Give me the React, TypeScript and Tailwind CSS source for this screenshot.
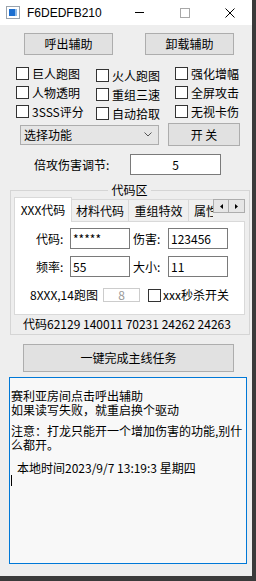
import React from "react";

const Check = ({ label, className = "" }: { label: string; className?: string }) => (
  <div className={`flex h-[19px] items-center gap-[3px] ${className}`}>
    <span className="block h-[13px] w-[13px] shrink-0 border border-[#333333] bg-white" />
    <span className="whitespace-nowrap">{label}</span>
  </div>
);

const Btn = ({ children, className = "" }: { children: React.ReactNode; className?: string }) => (
  <div
    className={`flex items-center justify-center border border-[#adadad] bg-[#e1e1e1] whitespace-pre ${className}`}
  >
    {children}
  </div>
);

const Field = ({ value }: { value: string }) => (
  <div className="flex h-[21px] w-[60px] items-center border border-[#7a7a7a] bg-white px-[2px]">{value}</div>
);

export default function App() {
  return (
    <div className="h-[581px] w-[256px] overflow-hidden bg-[#3a3a3a] font-['Noto_Sans_CJK_SC','Liberation_Sans',sans-serif] text-[12px] leading-[14px] text-black">
      <div className="flex h-[576px] w-[252px] flex-col bg-[#eeeeee]">
        {/* title bar */}
        <div className="flex h-[25px] shrink-0 items-center bg-white">
          <svg className="ml-[6px]" width="14" height="13" viewBox="0 0 14 13">
            <rect x="0.5" y="0.5" width="13" height="12" fill="#ffffff" stroke="#9aa3ad" />
            <rect x="3" y="3" width="6" height="7" fill="#1c6fd1" />
            <rect x="9" y="3" width="2" height="7" fill="#8fbbe8" />
          </svg>
          <span className="ml-[7px] font-['Liberation_Sans',sans-serif] text-[12px]">F6DEDFB210</span>
          <div className="ml-auto flex h-full items-center">
            <div className="flex w-[45px] justify-center">
              <span className="block h-px w-[9px] bg-black" />
            </div>
            <div className="flex w-[45px] justify-center">
              <span className="block h-[10px] w-[10px] border border-[#a8a8a8]" />
            </div>
            <div className="flex w-[45px] justify-center">
              <svg width="10" height="10" viewBox="0 0 10 10">
                <path d="M0.5 0.5 L9.5 9.5 M9.5 0.5 L0.5 9.5" stroke="#000" strokeWidth="1" />
              </svg>
            </div>
          </div>
        </div>

        {/* main buttons */}
        <div className="mt-[8px] flex gap-[32px] pl-[24px]">
          <Btn className="h-[22px] w-[89px]">呼出辅助</Btn>
          <Btn className="h-[22px] w-[89px]">卸载辅助</Btn>
        </div>

        {/* checkboxes */}
        <div className="mt-[9px] flex items-start pl-[16px]">
          <div className="flex w-[80px] flex-col">
            <Check label="巨人跑图" />
            <Check label="人物透明" />
            <Check label="3SSS评分" />
          </div>
          <div className="mt-[2px] flex w-[79px] flex-col">
            <Check label="火人跑图" />
            <Check label="重组三速" />
            <Check label="自动拾取" />
          </div>
          <div className="flex flex-col">
            <Check label="强化增幅" />
            <Check label="全屏攻击" />
            <Check label="无视卡伤" />
          </div>
        </div>

        {/* select row */}
        <div className="flex h-[23px] items-center pl-[20px]">
          <div className="flex h-[20px] w-[139px] items-center justify-between border border-[#adadad] bg-[#e5e5e5] pl-[3px] pr-[6px]">
            <span>选择功能</span>
            <svg width="8" height="5" viewBox="0 0 8 5">
              <path d="M0.5 0.5 L4 4 L7.5 0.5" fill="none" stroke="#555" strokeWidth="1" />
            </svg>
          </div>
          <Btn className="ml-[9px] h-[23px] w-[72px]">开 关</Btn>
        </div>

        {/* damage */}
        <div className="mt-[8px] flex h-[21px] items-center pl-[34px]">
          <span className="w-[96px]">倍攻伤害调节:</span>
          <div className="flex h-[21px] w-[91px] items-center justify-center border border-[#7a7a7a] bg-white">5</div>
        </div>

        {/* code group */}
        <fieldset className="ml-[10px] mt-[8px] w-[240px] border border-[#d5d5d5] pb-[3px] pl-[3px] pr-[4px]">
          <legend className="mx-auto px-[3px] leading-[14px]">代码区</legend>

          {/* tabs */}
          <div className="flex h-[25px]">
            <div className="flex w-[199px] items-end overflow-hidden">
              <div className="flex h-[25px] w-[58px] shrink-0 items-center justify-center border-x border-t border-[#d9d9d9] bg-white">
                XXX代码
              </div>
              <div className="flex h-[23px] w-[57px] shrink-0 items-center justify-center border-b border-r border-t border-[#d9d9d9] bg-[#f0f0f0]">
                材料代码
              </div>
              <div className="flex h-[23px] w-[60px] shrink-0 items-center justify-center border-b border-r border-t border-[#d9d9d9] bg-[#f0f0f0]">
                重组特效
              </div>
              <div className="flex h-[23px] w-[50px] shrink-0 items-center border-b border-t border-[#d9d9d9] bg-[#f0f0f0] pl-[5px]">
                属性
              </div>
            </div>
            <div className="flex h-[25px] w-[32px] items-start border-b border-[#d9d9d9] pt-[2px]">
              <div className="flex h-[14px] w-[16px] items-center justify-center border border-[#adadad] bg-[#e6e6e6]">
                <svg width="3" height="5" viewBox="0 0 3 5">
                  <path d="M3 0 L0 2.5 L3 5 Z" fill="#000" />
                </svg>
              </div>
              <div className="flex h-[14px] w-[16px] items-center justify-center border-y border-r border-[#adadad] bg-[#e6e6e6]">
                <svg width="3" height="5" viewBox="0 0 3 5">
                  <path d="M0 0 L3 2.5 L0 5 Z" fill="#000" />
                </svg>
              </div>
            </div>
          </div>

          {/* tab panel */}
          <div className="border-x border-b border-[#d9d9d9] bg-white pb-[12px] pt-[6px]">
            <div className="flex items-center pl-[21px]">
              <span className="w-[34px]">代码:</span>
              <Field value="*****" />
              <span className="ml-[3px] w-[35px]">伤害:</span>
              <Field value="123456" />
            </div>
            <div className="mt-[7px] flex items-center pl-[21px]">
              <span className="w-[34px]">频率:</span>
              <Field value="55" />
              <span className="ml-[3px] w-[35px]">大小:</span>
              <Field value="11" />
            </div>
            <div className="mt-[11px] flex h-[14px] items-center pl-[15px]">
              <span className="w-[73px] whitespace-nowrap">8XXX,14跑图</span>
              <div className="flex h-[14px] w-[37px] items-center justify-center border border-[#cccccc] text-[#9a9a9a]">
                8
              </div>
              <span className="ml-[8px] block h-[13px] w-[13px] border border-[#333333] bg-white" />
              <span className="ml-[2px] whitespace-nowrap">xxx秒杀开关</span>
            </div>
          </div>

          <div className="mt-[2px] whitespace-pre pl-[9px]">代码62129 140011 70231 24262 24263</div>
        </fieldset>

        <Btn className="ml-[23px] mt-[9px] h-[28px] w-[211px]">一键完成主线任务</Btn>

        {/* log box */}
        <div className="ml-[9px] mt-[5px] h-[187px] w-[238px] border border-[#0078d7] bg-[#f8f8f8] pl-[1px] pt-[11px]">
          <div className="whitespace-nowrap">赛利亚房间点击呼出辅助</div>
          <div className="whitespace-nowrap">如果读写失败，就重启换个驱动</div>
          <div className="mt-[7px] whitespace-nowrap">注意：打龙只能开一个增加伤害的功能,别什</div>
          <div className="whitespace-nowrap">么都开。</div>
          <div className="mt-[9px] whitespace-nowrap pl-[6px]">本地时间2023/9/7 13:19:3 星期四</div>
          <span className="block h-[11px] w-px bg-black" />
        </div>
      </div>
    </div>
  );
}
